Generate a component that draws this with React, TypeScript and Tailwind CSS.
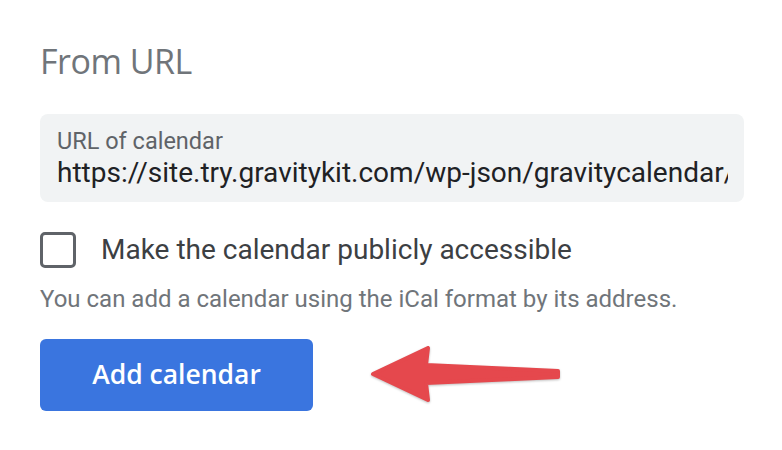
import React from 'react'

// ─── Arrow annotation ─────────────────────────────────────────────────────

function PointerArrow() {
  return (
    <svg width="196" height="60" viewBox="0 0 196 60" className="ml-[55px] drop-shadow-[0_1px_1px_rgba(0,0,0,0.25)]">
      <path
        d="M5 29 L60 3 L58 20 L190 26 L190 32 L58 38 L60 55 Z"
        fill="#e5484d"
        stroke="#e5484d"
        strokeWidth="4"
        strokeLinejoin="round"
      />
    </svg>
  )
}

export default function App() {
  return (
    <div className="w-[782px] h-[450px] bg-white pl-[40px] pr-[38px] pt-[37px] font-['Roboto',sans-serif]">
      <h2 className="font-['Open_Sans',sans-serif] text-[34px] leading-[48px] text-[#70757a] tracking-[-0.5px]">
        From URL
      </h2>

      <div className="mt-[29px] h-[88px] rounded-lg bg-[#f1f3f4] pl-[17px] pt-[12px] overflow-hidden">
        <div className="text-[23.5px] leading-[30px] text-[#5f6368]">URL of calendar</div>
        <div className="text-[28px] leading-[34px] text-[#202124] whitespace-nowrap overflow-hidden w-[671px]">
          https://site.try.gravitykit.com/wp-json/gravitycalendar/
        </div>
      </div>

      <label className="mt-[30px] flex items-center gap-[25px]">
        <span className="w-[36px] h-[36px] rounded-[5px] border-[3px] border-[#5f6368] shrink-0" />
        <span className="text-[28px] leading-[36px] text-[#3c4043]">Make the calendar publicly accessible</span>
      </label>

      <p className="mt-[16px] text-[24px] leading-[30px] text-[#70757a]">
        You can add a calendar using the iCal format by its address.
      </p>

      <div className="mt-[25px] flex items-center">
        <button className="w-[273px] h-[72px] rounded-md bg-[#3a75df] text-white font-['Open_Sans',sans-serif] text-[26.5px] font-semibold">
          Add calendar
        </button>
        <PointerArrow />
      </div>
    </div>
  )
}
